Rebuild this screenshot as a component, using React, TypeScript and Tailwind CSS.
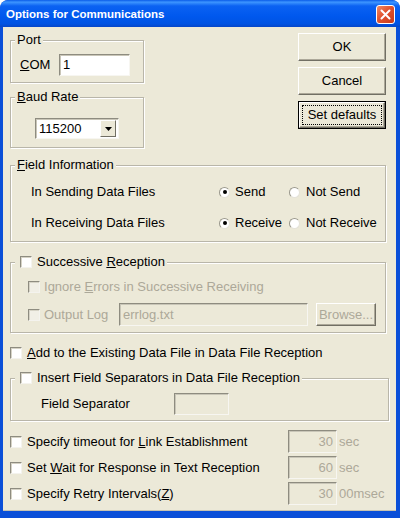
import type { ReactNode } from 'react';

const DIS = 'text-[#ACA899]';

function Check({ disabled = false }: { disabled?: boolean }) {
  return (
    <span
      className={`inline-block w-[12px] h-[12px] shrink-0 border border-[#8E8C80] border-r-[#F4F3EE] border-b-[#F4F3EE] shadow-[inset_1px_1px_0_#D6D3C6] ${
        disabled ? 'bg-[#F1EFE6]' : 'bg-white'
      }`}
    />
  );
}

function Radio({ checked = false }: { checked?: boolean }) {
  return (
    <span className="inline-flex items-center justify-center w-[11px] h-[11px] shrink-0 rounded-full bg-white border border-[#9A988C] border-r-[#E4E2D8] border-b-[#E4E2D8]">
      {checked && <span className="w-[4px] h-[4px] rounded-full bg-black" />}
    </span>
  );
}

function Field({
  className,
  disabled = false,
  align = 'left',
  children,
}: {
  className: string;
  disabled?: boolean;
  align?: 'left' | 'right';
  children?: ReactNode;
}) {
  return (
    <div
      className={`flex items-center border border-[#8E8C80] border-r-[#F7F6F1] border-b-[#F7F6F1] shadow-[inset_1px_1px_0_#C9C6B8] ${
        disabled ? `bg-[#ECE9D8] ${DIS}` : 'bg-white'
      } ${align === 'right' ? 'justify-end pr-[3px]' : 'pl-[3px]'} ${className}`}
    >
      {children}
    </div>
  );
}

function Button({
  children,
  focused = false,
  disabled = false,
  className = '',
}: {
  children: ReactNode;
  focused?: boolean;
  disabled?: boolean;
  className?: string;
}) {
  return (
    <div
      className={`relative flex items-center justify-center bg-[#ECE9D8] ${
        focused ? 'border border-black' : ''
      } ${className}`}
    >
      <div className="absolute inset-[0px] border border-white border-r-[#716F64] border-b-[#716F64] shadow-[inset_-1px_-1px_0_#ACA899]" />
      {focused && (
        <div className="absolute inset-[3px] border border-dotted border-black" />
      )}
      <span className={`relative ${disabled ? DIS : ''}`}>{children}</span>
    </div>
  );
}

// fieldset keeps horizontal padding at 0 so the legend stays at the left edge
function GroupBox({
  legend,
  className,
  innerClass,
  children,
}: {
  legend: ReactNode;
  className: string;
  innerClass: string;
  children: ReactNode;
}) {
  return (
    <fieldset
      className={`border border-[#B9B6A9] shadow-[inset_1px_1px_0_#fff,1px_1px_0_#fff] ${className}`}
    >
      <legend className="ml-[4px] px-[2px] h-[14px] leading-[14px] bg-[#ECE9D8]">
        {legend}
      </legend>
      <div className={innerClass}>{children}</div>
    </fieldset>
  );
}

function TimeRow({
  label,
  value,
  unit,
}: {
  label: ReactNode;
  value: string;
  unit: string;
}) {
  return (
    <div className="flex items-center h-[23px]">
      <Check />
      <span className="ml-[5px] w-[261px]">{label}</span>
      <Field className="w-[49px] h-[23px]" disabled align="right">
        {value}
      </Field>
      <span className={`ml-[2px] ${DIS}`}>{unit}</span>
    </div>
  );
}

export default function App() {
  return (
    <div className="w-[400px] h-[518px] flex flex-col rounded-t-[8px] bg-[#0A4FD8] font-['Liberation_Sans',Arial,sans-serif] text-[13px] leading-[14px] text-black overflow-hidden">
      {/* Title bar */}
      <div className="h-[27px] shrink-0 flex items-center justify-between pl-[6px] pr-[5px] rounded-t-[8px] bg-[linear-gradient(to_bottom,#0A5CE8_0%,#3D95FF_8%,#0B62F2_22%,#0058EE_60%,#0053E3_88%,#0646C8_100%)]">
        <span className="text-white font-bold text-[11.5px] mt-[1px]">
          Options for Communications
        </span>
        <div className="w-[19px] h-[19px] mt-[1px] rounded-[3px] border border-white bg-[linear-gradient(135deg,#F08A64_0%,#E1532F_45%,#C8391A_100%)] flex items-center justify-center">
          <svg width="11" height="11" viewBox="0 0 11 11">
            <path
              d="M1.5 1.5 L9.5 9.5 M9.5 1.5 L1.5 9.5"
              stroke="white"
              strokeWidth="2"
              strokeLinecap="round"
            />
          </svg>
        </div>
      </div>

      {/* Body */}
      <div className="flex-1 ml-[3px] mr-[4px] mb-[7px] bg-[#ECE9D8] pl-[7px] border-b border-[#C5C2B2]">
        {/* top row */}
        <div className="flex justify-between pr-[10px] mt-[6px]">
          <div className="w-[134px] flex flex-col">
            <GroupBox legend="Port" className="w-[134px]" innerClass="pt-[7px] pb-[6px] pl-[9px]">
              <div className="flex items-center">
                <span className="w-[39px]">
                  <span className="underline">C</span>OM
                </span>
                <Field className="w-[71px] h-[22px]">1</Field>
              </div>
            </GroupBox>
            <GroupBox
              legend={
                <span>
                  <span className="underline">B</span>aud Rate
                </span>
              }
              className="w-[134px] mt-[7px]"
              innerClass="pt-[14px] pb-[8px] pl-[24px]"
            >
              <Field className="w-[84px] h-[21px] justify-between pr-[2px]">
                <span>115200</span>
                <div className="relative w-[16px] h-[17px] bg-[#ECE9D8] border border-white border-r-[#716F64] border-b-[#716F64] flex items-center justify-center">
                  <svg width="7" height="4" viewBox="0 0 7 4">
                    <path d="M0 0 H7 L3.5 4 Z" fill="black" />
                  </svg>
                </div>
              </Field>
            </GroupBox>
          </div>
          <div className="w-[88px] flex flex-col gap-[6px]">
            <Button className="h-[28px]">OK</Button>
            <Button className="h-[28px]">Cancel</Button>
            <Button className="h-[28px]" focused>
              Set defaults
            </Button>
          </div>
        </div>

        {/* Field Information */}
        <GroupBox
          legend={
            <span>
              <span className="underline">F</span>ield Information
            </span>
          }
          className="w-[376px] mt-[10px]"
          innerClass="pt-[10px] pb-[8px] pl-[20px] flex flex-col gap-[11px]"
        >
          <div className="flex items-center h-[20px]">
            <span className="w-[188px]">In Sending Data Files</span>
            <div className="w-[70px] flex items-center gap-[5px]">
              <Radio checked />
              <span>Send</span>
            </div>
            <div className="flex items-center gap-[6px]">
              <Radio />
              <span>Not Send</span>
            </div>
          </div>
          <div className="flex items-center h-[20px]">
            <span className="w-[188px]">In Receiving Data Files</span>
            <div className="w-[70px] flex items-center gap-[5px]">
              <Radio checked />
              <span>Receive</span>
            </div>
            <div className="flex items-center gap-[6px]">
              <Radio />
              <span>Not Receive</span>
            </div>
          </div>
        </GroupBox>

        {/* Successive Reception */}
        <GroupBox
          legend={
            <span className="flex items-center pl-[3px]">
              <Check />
              <span className="ml-[5px]">
                Successive <span className="underline">R</span>eception
              </span>
            </span>
          }
          className="w-[376px] mt-[13px]"
          innerClass="pt-[8px] pb-[6px] pl-[17px]"
        >
          <div className="flex items-center h-[20px]">
            <Check disabled />
            <span className={`ml-[4px] ${DIS}`}>
              I<span className="underline">g</span>nore <span className="underline">E</span>rrors in Successive Receiving
            </span>
          </div>
          <div className="flex items-center h-[23px] mt-[6px]">
            <Check disabled />
            <span className={`ml-[4px] w-[75px] ${DIS}`}>Output Log</span>
            <Field className="w-[189px] h-[23px]" disabled>
              errlog.txt
            </Field>
            <Button className="w-[60px] h-[23px] ml-[8px]" disabled>
              Browse...
            </Button>
          </div>
        </GroupBox>

        {/* Add to existing */}
        <div className="flex items-center h-[20px] mt-[10px]">
          <Check />
          <span className="ml-[5px]">
            <span className="underline">A</span>dd to the Existing Data File in Data File Reception
          </span>
        </div>

        {/* Insert Field Separators */}
        <GroupBox
          legend={
            <span className="flex items-center pl-[3px]">
              <Check />
              <span className="ml-[5px]">Insert Field Separators in Data File Reception</span>
            </span>
          }
          className="w-[379px] mt-[8px]"
          innerClass="pt-[8px] pb-[5px] pl-[30px] flex items-center"
        >
          <span className="w-[133px]">Field Separator</span>
          <Field className="w-[55px] h-[22px]" disabled />
        </GroupBox>

        {/* Bottom options */}
        <div className="flex flex-col gap-[3px] mt-[9px]">
          <TimeRow
            label={
              <>
                Specify timeout for <span className="underline">L</span>ink Establishment
              </>
            }
            value="30"
            unit="sec"
          />
          <TimeRow
            label={
              <>
                Set <span className="underline">W</span>ait for Response in Text Reception
              </>
            }
            value="60"
            unit="sec"
          />
          <TimeRow
            label={
              <>
                Specify Retry Intervals(<span className="underline">Z</span>)
              </>
            }
            value="30"
            unit="00msec"
          />
        </div>
      </div>
    </div>
  );
}
